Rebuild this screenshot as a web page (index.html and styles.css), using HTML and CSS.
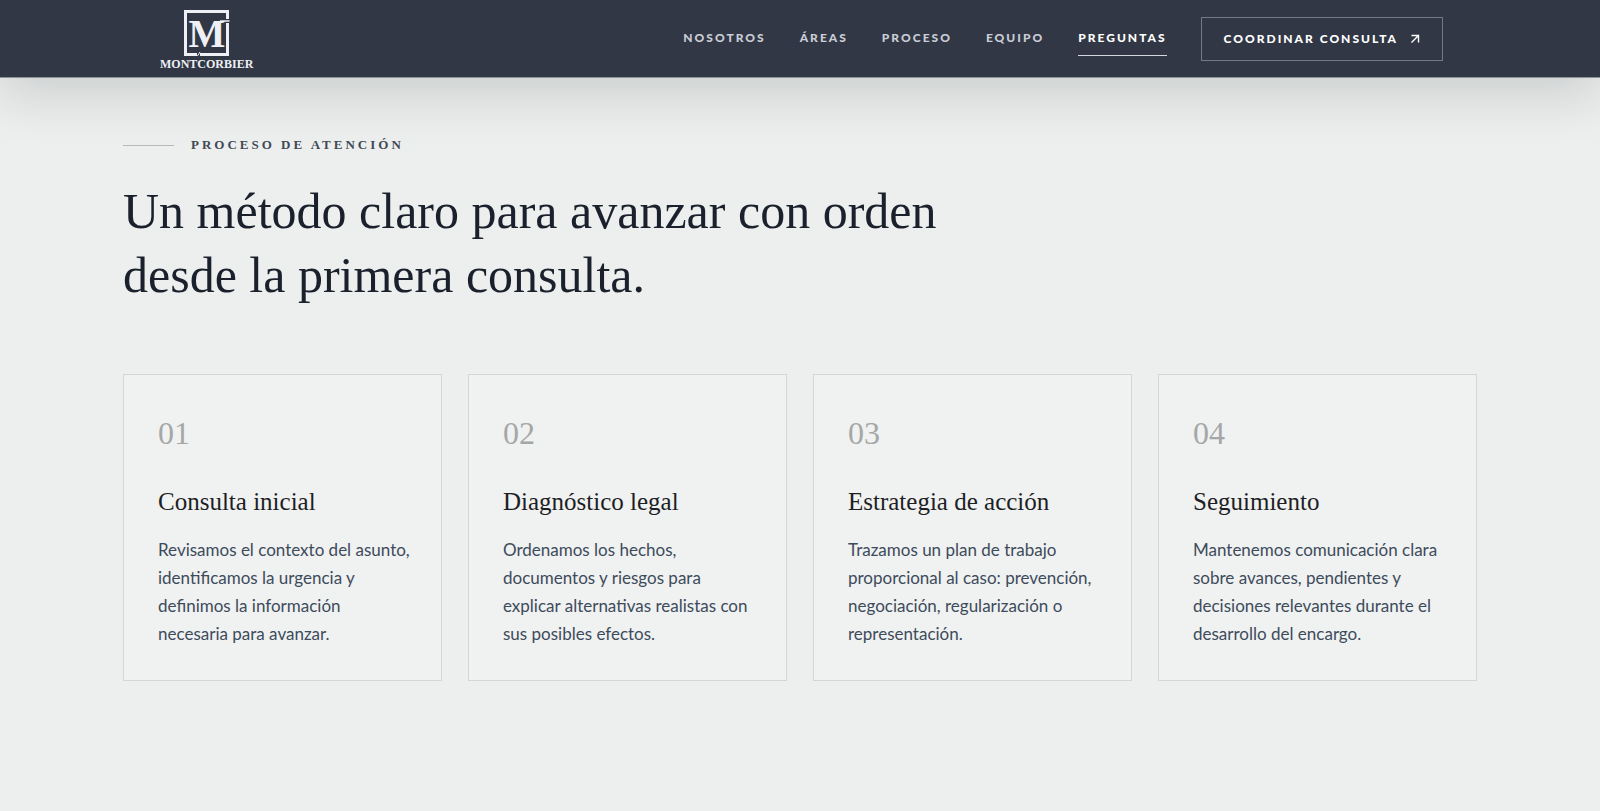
FILE: index.html
```
<!DOCTYPE html>
<html lang="es">
<head>
  <meta charset="UTF-8">
  <meta name="viewport" content="width=device-width, initial-scale=1.0">
  <title>Montcorbier - Proceso de atención</title>
  <link rel="stylesheet" href="styles.css">
</head>
<body>
  <!-- Header -->
  <header class="site-header">
    <div class="header-inner">
      <a href="#inicio" class="logo">
        <svg class="logo-mark" width="46" height="47" viewBox="0 0 46 47" aria-hidden="true">
          <path d="M43.500 9V1.500H1.500V44.500H13M16 44.500H43.500V13" fill="none" stroke="currentColor" stroke-width="3"/>
          <path d="M36 11H45.500" stroke="currentColor" stroke-width="1.500"/>
          <path d="M16 42L13.500 46" stroke="currentColor" stroke-width="1"/>
          <text x="23" y="37" text-anchor="middle" class="logo-letter">M</text>
        </svg>
        <span class="logo-name">MONTCORBIER</span>
      </a>

      <nav class="main-nav">
        <a href="#nosotros">Nosotros</a>
        <a href="#areas">Áreas</a>
        <a href="#proceso">Proceso</a>
        <a href="#equipo">Equipo</a>
        <a href="#preguntas" class="active">Preguntas</a>
        <a href="#contacto" class="nav-cta">
          Coordinar consulta
          <svg width="10" height="10" viewBox="0 0 10 10" fill="none" stroke="currentColor" stroke-width="1.4" aria-hidden="true">
            <path d="M1.500 1.500H8.500V8.500M8.500 1.500L1.500 8.500"/>
          </svg>
        </a>
      </nav>
    </div>
  </header>

  <!-- Process section -->
  <main>
    <section class="process" id="proceso">
      <p class="eyebrow">Proceso de atención</p>
      <h2>Un método claro para avanzar con orden desde la primera consulta.</h2>

      <div class="steps">
        <article class="step">
          <span class="step-number">01</span>
          <h3>Consulta inicial</h3>
          <p>Revisamos el contexto del asunto, identificamos la urgencia y definimos la información necesaria para avanzar.</p>
        </article>
        <article class="step">
          <span class="step-number">02</span>
          <h3>Diagnóstico legal</h3>
          <p>Ordenamos los hechos, documentos y riesgos para explicar alternativas realistas con sus posibles efectos.</p>
        </article>
        <article class="step">
          <span class="step-number">03</span>
          <h3>Estrategia de acción</h3>
          <p>Trazamos un plan de trabajo proporcional al caso: prevención, negociación, regularización o representación.</p>
        </article>
        <article class="step">
          <span class="step-number">04</span>
          <h3>Seguimiento</h3>
          <p>Mantenemos comunicación clara sobre avances, pendientes y decisiones relevantes durante el desarrollo del encargo.</p>
        </article>
      </div>
    </section>
  </main>
</body>
</html>
```
FILE: styles.css
```
/* General reset and layout */
* {
  margin: 0;
  padding: 0;
  box-sizing: border-box;
}
body {
  font-family: Lato, sans-serif;
  background-color: #edefee;
  color: #1b212c;
}
a {
  color: inherit;
  text-decoration: none;
}

/* Header */
.site-header {
  position: sticky;
  top: 0;
  z-index: 10;
  background-color: #313744;
  border-bottom: 1px solid #8d9296;
  box-shadow: 0 18px 50px rgba(20, 28, 32, 0.15);
}
.header-inner {
  display: flex;
  align-items: center;
  justify-content: space-between;
  max-width: 1286px;
  min-height: 77px;
  margin: auto;
  padding-left: 3px;
}
.logo {
  display: flex;
  flex-direction: column;
  align-items: center;
  padding-top: 4px;
  color: #eef0f5;
  font-family: "Liberation Serif", serif;
}
.logo-mark {
  display: block;
}
.logo-letter {
  font-size: 39px;
  font-weight: bold;
  fill: currentColor;
}
.logo-name {
  font-size: 12px;
  line-height: 14px;
  font-weight: bold;
}
.main-nav {
  display: flex;
  align-items: center;
  gap: 34px;
  color: #c9cdd6;
  font-size: 12px;
  line-height: 18px;
  font-weight: 900;
  letter-spacing: 2px;
  text-transform: uppercase;
}
.main-nav a {
  padding: 8px 0;
  border-bottom: 1px solid transparent;
}
.main-nav .active {
  color: #fff;
  border-bottom-color: #d4d8de;
}
.main-nav .nav-cta {
  display: flex;
  align-items: center;
  gap: 12px;
  padding: 12px 22px;
  border: 1px solid #747a85;
  color: #fff;
}

/* Process section */
.process {
  max-width: 1354px;
  margin: auto;
  padding: 57px 0 130px;
}
.eyebrow {
  display: flex;
  align-items: center;
  gap: 17px;
  color: #3f4a57;
  font-family: "Liberation Serif", serif;
  font-size: 13px;
  line-height: 20px;
  font-weight: bold;
  letter-spacing: 3px;
  text-transform: uppercase;
}
.eyebrow::before {
  content: "";
  width: 51px;
  height: 1px;
  background-color: #b5b9b9;
}
.process h2 {
  max-width: 860px;
  margin-top: 24px;
  font-family: "Liberation Serif", serif;
  font-size: 50px;
  line-height: 64px;
  font-weight: normal;
}
.steps {
  display: grid;
  grid-template-columns: repeat(4, 1fr);
  gap: 26px;
  margin-top: 67px;
}
.step {
  padding: 34px 28px 32px 34px;
  background-color: #f0f1f1;
  border: 1px solid #d3d8d7;
}
.step-number {
  display: block;
  color: #a5a7a7;
  font-family: "Liberation Serif", serif;
  font-size: 32px;
  line-height: 48px;
}
.step h3 {
  margin-top: 29px;
  color: #1d1f24;
  font-family: "Liberation Serif", serif;
  font-size: 25px;
  line-height: 32px;
  font-weight: normal;
}
.step p {
  margin-top: 18px;
  color: #3d4b5b;
  font-size: 17px;
  line-height: 28px;
}

@media (max-width: 1400px) {
  .header-inner,
  .process {
    margin: 0 40px;
  }
}
@media (max-width: 1100px) {
  .main-nav {
    flex-wrap: wrap;
    justify-content: flex-end;
    gap: 12px 24px;
  }
  .steps {
    grid-template-columns: repeat(2, 1fr);
  }
}
```
